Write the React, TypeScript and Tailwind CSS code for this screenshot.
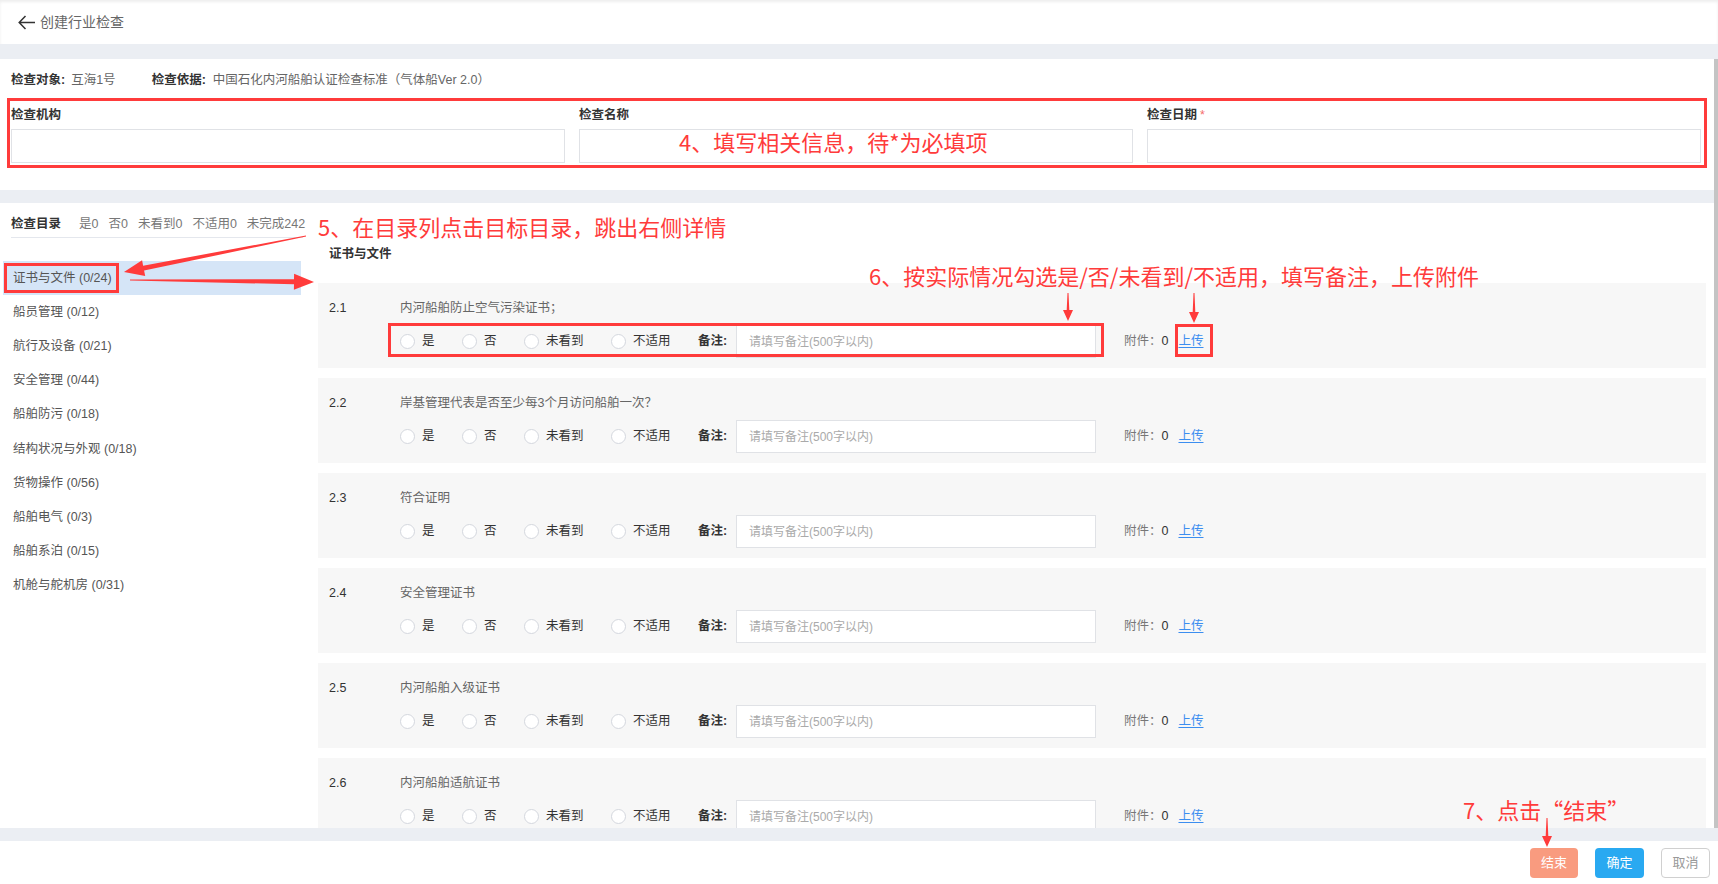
import React from 'react';

const cats: [string, string][] = [
  ['证书与文件', '0/24'],
  ['船员管理', '0/12'],
  ['航行及设备', '0/21'],
  ['安全管理', '0/44'],
  ['船舶防污', '0/18'],
  ['结构状况与外观', '0/18'],
  ['货物操作', '0/56'],
  ['船舶电气', '0/3'],
  ['船舶系泊', '0/15'],
  ['机舱与舵机房', '0/31'],
];

const items: [string, string][] = [
  ['2.1', '内河船舶防止空气污染证书；'],
  ['2.2', '岸基管理代表是否至少每3个月访问船舶一次？'],
  ['2.3', '符合证明'],
  ['2.4', '安全管理证书'],
  ['2.5', '内河船舶入级证书'],
  ['2.6', '内河船舶适航证书'],
];

const options: [string, string][] = [
  ['是', 'w-[62px]'],
  ['否', 'w-[62px]'],
  ['未看到', 'w-[87px]'],
  ['不适用', 'w-[87px]'],
];

// tapered arrow: thin tail, wider shaft near the head, then the head
function arrow(x1: number, y1: number, x2: number, y2: number, L: number, W: number, w: number) {
  const len = Math.hypot(x2 - x1, y2 - y1);
  const dx = (x2 - x1) / len;
  const dy = (y2 - y1) / len;
  const nx = -dy;
  const ny = dx;
  const hx = x2 - dx * L;
  const hy = y2 - dy * L;
  const pts = [
    [x1 + nx * 0.5, y1 + ny * 0.5],
    [hx + nx * w, hy + ny * w],
    [hx + nx * W, hy + ny * W],
    [x2, y2],
    [hx - nx * W, hy - ny * W],
    [hx - nx * w, hy - ny * w],
    [x1 - nx * 0.5, y1 - ny * 0.5],
  ];
  return pts.map((p) => p[0].toFixed(1) + ',' + p[1].toFixed(1)).join(' ');
}

const Radio = ({ label, w }: { label: string; w: string }) => (
  <div className={`flex items-center ${w}`}>
    <span className="w-[15px] h-[15px] rounded-full border border-[#d4d7de] bg-white shrink-0" />
    <span className="ml-[7px] text-[#333]">{label}</span>
  </div>
);

export default function App() {
  return (
    <div className="relative w-[1718px] h-[884px] bg-[#ebeef3] overflow-hidden text-[12.5px] font-['Liberation_Sans','Noto_Sans_CJK_SC',sans-serif]">
      {/* header */}
      <div className="h-[44px] bg-white flex items-center pl-[18px] shadow-[inset_0_2px_3px_rgba(0,0,0,0.07)]">
        <svg width="17" height="15" viewBox="0 0 17 15" fill="none" stroke="#333" strokeWidth="1.5">
          <path d="M7.5 1 L1.2 7.5 L7.5 14 M1.2 7.5 H17" />
        </svg>
        <span className="ml-[5px] text-[14px] text-[#666]">创建行业检查</span>
      </div>

      <div className="flex h-[784px]">
        <div className="w-[1714px] flex flex-col">
          {/* info */}
          <div className="mt-[15px] h-[131px] bg-white pt-[13px] pl-[11px]">
            <div className="flex items-center h-[16px] leading-[16px] whitespace-nowrap">
              <span className="font-bold text-[#333]">检查对象:</span>
              <span className="ml-[6px] text-[#666]">互海1号</span>
              <span className="ml-[36px] font-bold text-[#333]">检查依据:</span>
              <span className="ml-[7px] text-[#666]">中国石化内河船舶认证检查标准（气体船Ver 2.0）</span>
            </div>
            <div className="mt-[19px] grid grid-cols-[554px_554px_554px] gap-x-[14px]">
              {['检查机构', '检查名称', '检查日期'].map((l, i) => (
                <div key={l}>
                  <div className="h-[16px] leading-[16px] font-bold text-[#333]">
                    {l}
                    {i === 2 && <span className="ml-[3px] text-[#f56c6c] font-normal">*</span>}
                  </div>
                  <div className="mt-[6px] h-[34px] bg-white border border-[#e0e2e6]" />
                </div>
              ))}
            </div>
          </div>

          {/* main */}
          <div className="mt-[13px] h-[625px] bg-white flex">
            <div className="w-[318px] shrink-0">
              <div className="ml-[11px] w-[292px] pt-[11px] pb-[4px] border-b border-[#e4e7ed] flex items-center h-[35px] leading-[20px] whitespace-nowrap">
                <span className="shrink-0 font-bold text-[#333]">检查目录</span>
                <span className="shrink-0 ml-[18px] text-[#777]">是0</span>
                <span className="shrink-0 ml-[10px] text-[#777]">否0</span>
                <span className="shrink-0 ml-[10px] text-[#777]">未看到0</span>
                <span className="shrink-0 ml-[10px] text-[#777]">不适用0</span>
                <span className="shrink-0 ml-[10px] text-[#777]">未完成242</span>
              </div>
              <div className="mt-[23px] ml-[3px] w-[298px]">
                {cats.map(([n, c], i) => (
                  <div
                    key={n}
                    className={`h-[34.2px] flex items-center pl-[10px] text-[#555] whitespace-nowrap ${i === 0 ? 'bg-[#d5e5f7]' : ''}`}
                  >
                    {n} ({c})
                  </div>
                ))}
              </div>
            </div>

            <div className="w-[1388px] overflow-hidden">
              <div className="pt-[43px] pl-[11px] h-[59px] leading-[16px] font-bold text-[#333]">证书与文件</div>
              <div className="mt-[21px] flex flex-col gap-[10px]">
                {items.map(([no, t]) => (
                  <div key={no} className="h-[85px] shrink-0 bg-[#f7f7f7] pt-[17px]">
                    <div className="flex h-[16px] leading-[16px]">
                      <span className="w-[82px] pl-[11px] text-[#333]">{no}</span>
                      <span className="text-[#666]">{t}</span>
                    </div>
                    <div className="mt-[9px] h-[33px] pl-[82px] flex items-center whitespace-nowrap">
                      {options.map(([l, w]) => (
                        <Radio key={l} label={l} w={w} />
                      ))}
                      <span className="w-[38px] font-bold text-[#333]">备注:</span>
                      <div className="w-[360px] h-[33px] bg-white border border-[#e0e2e6] flex items-center pl-[12px] text-[12px] text-[#aaa]">
                        请填写备注(500字以内)
                      </div>
                      <span className="ml-[28px] text-[#777]">附件：</span>
                      <span className="text-[#333]">0</span>
                      <span className="ml-[10px] text-[#3c8ef0] underline underline-offset-2">上传</span>
                    </div>
                  </div>
                ))}
              </div>
            </div>
          </div>
        </div>
        <div className="w-[4px] pt-[15px]">
          <div className="h-[769px] bg-[#c4c4c4]" />
        </div>
      </div>

      {/* footer */}
      <div className="mt-[13px] h-[43px] bg-white flex items-center justify-end pr-[8px] gap-[17px]">
        <button className="w-[48px] h-[30px] rounded-[4px] bg-[#f99b7f] text-white text-[13px]">结束</button>
        <button className="w-[49px] h-[30px] rounded-[4px] bg-[#29a9f1] text-white text-[13px]">确定</button>
        <button className="w-[49px] h-[30px] rounded-[4px] bg-white border border-[#d0d0d0] text-[#999] text-[13px]">取消</button>
      </div>

      {/* annotations */}
      <div className="absolute left-[7px] top-[98px] w-[1700px] h-[70px] border-[3px] border-[#ff3b3b]" />
      <div className="absolute left-[679px] top-[128px] text-[22px] leading-[26px] text-[#ff3b3b] font-['Noto_Sans_CJK_SC',sans-serif]">
        4、填写相关信息，待*为必填项
      </div>
      <div className="absolute left-[318px] top-[213px] text-[22px] leading-[26px] text-[#ff3b3b] font-['Noto_Sans_CJK_SC',sans-serif]">
        5、在目录列点击目标目录，跳出右侧详情
      </div>
      <div className="absolute left-[4px] top-[263px] w-[115px] h-[30px] border-[3px] border-[#ff3b3b]" />
      <div className="absolute left-[869px] top-[262px] text-[22px] leading-[26px] text-[#ff3b3b] font-['Noto_Sans_CJK_SC',sans-serif]">
        6、按实际情况勾选是/否/未看到/不适用，填写备注，上传附件
      </div>
      <div className="absolute left-[388px] top-[323px] w-[716px] h-[34px] border-[3px] border-[#ff3b3b]" />
      <div className="absolute left-[1175px] top-[324px] w-[38px] h-[33px] border-[3px] border-[#ff3b3b]" />
      <div className="absolute left-[1463px] top-[796px] text-[22px] leading-[26px] text-[#ff3b3b] font-['Noto_Sans_CJK_SC',sans-serif]">
        7、点击“结束”
      </div>
      <svg className="absolute inset-0 pointer-events-none" width="1718" height="884" viewBox="0 0 1718 884">
        <g fill="#ff3b3b">
          <polygon points={arrow(306, 236, 124, 272, 20, 8, 2.5)} />
          <polygon points={arrow(130, 280, 314, 282, 20, 8, 2.5)} />
          <polygon points={arrow(1068, 293, 1068, 321, 11, 5, 1.3)} />
          <polygon points={arrow(1194, 293, 1194, 323, 11, 5, 1.3)} />
          <polygon points={arrow(1547, 818, 1547, 847, 11, 5, 1.3)} />
        </g>
      </svg>
    </div>
  );
}
